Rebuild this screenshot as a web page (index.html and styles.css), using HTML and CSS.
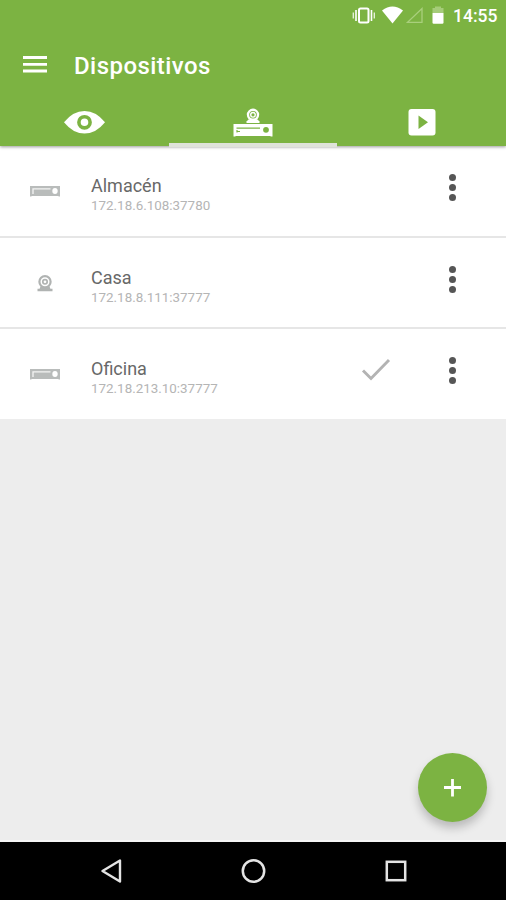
FILE: index.html
```html
<!DOCTYPE html>
<html lang="es">
<head>
<meta charset="utf-8">
<title>Dispositivos</title>
<link rel="stylesheet" href="styles.css">
</head>
<body>
<svg class="defs" width="0" height="0">
  <symbol id="dvr" viewBox="0 0 30 11">
    <path fill="#b9bcbb" d="M0 0h30v10.5h-1.5V10h-27v.5H0z"/>
    <path fill="none" stroke="#f4f4f4" stroke-width="1.3" d="M3 8V2.900H20.500"/>
    <ellipse cx="25" cy="5" rx="2.700" ry="3" fill="#fff"/>
  </symbol>
</svg>
<div class="screen">
  <header class="header">
    <div class="status">
      <svg width="104" height="32" viewBox="350 0 104 32">
        <g fill="none" stroke="#fff">
          <rect x="359" y="8.500" width="9.500" height="14" rx="1.500" stroke-width="2"/>
          <path stroke-width="1.600" d="M356 10v11M371.500 10v11"/>
          <path stroke-width="1.300" opacity=".85" d="M353.300 12.500v6M374.300 12.500v6"/>
        </g>
        <path fill="#fff" d="M382 10.500Q392.500 2.500 403 10.500L392.500 23.500z"/>
        <path fill="none" stroke="#a9cf7c" stroke-width="1.300" d="M407.500 22.300H422V8.500z"/>
        <path fill="#a5cc79" d="M435 6.500h6V8h2.500v5H432.500V8H435z"/>
        <path fill="#fff" d="M432.500 13h11v9.500q0 1.200-1.200 1.200h-8.600q-1.200 0-1.200-1.200z"/>
      </svg>
      <span class="clock">14:55</span>
    </div>
    <div class="bar">
      <svg width="24" height="18" viewBox="0 0 24 18"><path stroke="#fff" stroke-width="2.800" d="M0 1.500h24M0 8.300h24M0 15h24"/></svg>
      <h1 class="title">Dispositivos</h1>
    </div>
    <nav class="tabs">
      <div class="tab">
        <svg width="42" height="24" viewBox="0 0 42 24"><path fill="#fff" d="M1 12.300Q10 1 21.500 1T42 12.300Q33 23.600 21.500 23.600T1 12.300z"/><circle cx="21.500" cy="12.300" r="5.600" fill="none" stroke="#7cb342" stroke-width="3.600"/></svg>
      </div>
      <div class="tab active">
        <svg width="40" height="29" viewBox="0 0 40 29">
          <circle cx="20" cy="6.800" r="5" fill="none" stroke="#fff" stroke-width="2.400"/>
          <circle cx="20" cy="6.800" r="2.300" fill="none" stroke="#fff" stroke-width="1.400"/>
          <path fill="#fff" d="M15.500 11.500h9l2 2v1.500h-13v-1.500z"/>
          <path fill="#fff" d="M.5 16h39v12.500h-2V28h-35v.5h-2z"/>
          <path fill="none" stroke="#7cb342" stroke-width="1.200" d="M3.500 20.200h23.500M4 22v2.500M4 23.500h3"/>
          <circle cx="33" cy="21.800" r="2.900" fill="#7cb342"/>
        </svg>
      </div>
      <div class="tab">
        <svg width="28" height="28" viewBox="0 0 28 28"><rect x=".5" y="1" width="27" height="26.500" rx="3" fill="#fff"/><path fill="#7cb342" d="M10.500 7.500v13.500l9.500-6.750z"/></svg>
      </div>
    </nav>
  </header>
  <main class="list">
    <div class="row">
      <div class="icon"><svg width="30" height="11"><use href="#dvr"/></svg></div>
      <div class="text"><div class="name">Almacén</div><div class="addr">172.18.6.108:37780</div></div>
      <div class="more"><i></i><i></i><i></i></div>
    </div>
    <div class="row">
      <div class="icon"><svg width="16" height="17" viewBox="0 0 16 17"><g fill="none" stroke="#b0b3b2"><circle cx="8" cy="6.800" r="5.600" stroke-width="2.200"/><circle cx="8" cy="6.800" r="2.200" stroke-width="1.700"/><path stroke-width="2.600" d="M.5 15h15M3 12.700l2 .8h6l2-.8"/></g></svg></div>
      <div class="text"><div class="name">Casa</div><div class="addr">172.18.8.111:37777</div></div>
      <div class="more"><i></i><i></i><i></i></div>
    </div>
    <div class="row">
      <div class="icon"><svg width="30" height="11"><use href="#dvr"/></svg></div>
      <div class="text"><div class="name">Oficina</div><div class="addr">172.18.213.10:37777</div></div>
      <svg class="check" width="30" height="24" viewBox="0 0 30 24"><path fill="none" stroke="#b3b3b3" stroke-width="2.900" d="M2 12.500l8 8L28 2"/></svg>
      <div class="more"><i></i><i></i><i></i></div>
    </div>
  </main>
  <button class="fab" aria-label="Añadir"><svg width="18" height="18" viewBox="0 0 18 18"><path stroke="#fff" stroke-width="2.800" d="M0 8.500h17M8.500 0v17.500"/></svg></button>
  <footer class="nav">
    <svg width="22" height="25" viewBox="0 0 22 25"><path fill="none" stroke="#e4e4e4" stroke-width="2.400" stroke-linejoin="round" d="M20 1.500v21L2.500 12z"/></svg>
    <svg width="26" height="26" viewBox="0 0 26 26"><circle cx="12.500" cy="13" r="10.700" fill="none" stroke="#e4e4e4" stroke-width="2.500"/></svg>
    <svg width="22" height="22" viewBox="0 0 22 22"><rect x="1.800" y="1.800" width="18.400" height="18.400" fill="none" stroke="#e4e4e4" stroke-width="2.500"/></svg>
  </footer>
</div>
</body>
</html>
```

FILE: styles.css
```css
* { box-sizing: border-box; }
body { margin: 0; font-family: Roboto, "Liberation Sans", sans-serif; }
svg { display: block; flex: none; }
.defs { position: absolute; }
.screen {
  position: relative;
  display: flex;
  flex-direction: column;
  width: 506px;
  height: 900px;
  overflow: hidden;
  background: #ededed;
}
.header {
  position: relative;
  z-index: 1;
  height: 146px;
  background: #7cb342;
  box-shadow: 0 1px 3px rgba(0, 0, 0, .4);
}
.status {
  display: flex;
  justify-content: flex-end;
  height: 32px;
  padding-right: 9px;
}
.clock {
  width: 44px;
  margin-left: -1px;
  font-size: 17.5px;
  font-weight: 500;
  line-height: 32px;
  color: #fff;
  white-space: nowrap;
}
.bar {
  display: flex;
  align-items: center;
  gap: 27px;
  height: 66px;
  padding-left: 23px;
}
.title {
  margin: 0;
  font-size: 24px;
  font-weight: 500;
  letter-spacing: .45px;
  line-height: 28px;
  color: #fff;
  padding-top: 2px;
}
.tabs { display: flex; height: 49px; }
.tab {
  flex: 1;
  display: flex;
  align-items: center;
  justify-content: center;
  border-bottom: 4px solid transparent;
  padding-top: 3px;
}
.active { border-color: #dfe3da; }
.list { flex: none; background: #fff; }
.row {
  display: flex;
  align-items: flex-start;
  height: 92px;
  border-bottom: 2px solid #e6e6e6;
}
.row + .row { height: 91px; }
.row:last-child { height: 90px; border-bottom: 0; }
.icon {
  display: flex;
  align-items: center;
  justify-content: center;
  width: 91px;
  height: 91px;
  padding-right: 1px;
}
.text { flex: 1; padding-top: 29px; }
.name { font-size: 18px; line-height: 22px; color: #686868; }
.addr { font-size: 13.4px; line-height: 17px; color: #b5b5b5; }
.check { margin: 29px 54px 0 0; }
.more {
  display: flex;
  flex-direction: column;
  gap: 3px;
  width: 61px;
  padding: 28px 0 0 4px;
}
.more i { width: 7px; height: 7px; border-radius: 50%; background: #565656; }
.fab {
  position: absolute;
  z-index: 1;
  right: 19px;
  bottom: 78px;
  display: flex;
  align-items: center;
  justify-content: center;
  width: 69px;
  height: 69px;
  padding: 0;
  border: 0;
  border-radius: 50%;
  background: #7cb342;
  box-shadow: 0 6px 10px rgba(0, 0, 0, .22);
}
.nav {
  display: flex;
  align-items: center;
  justify-content: space-between;
  height: 58px;
  margin-top: auto;
  padding: 0 99px 0 100px;
  background: #000;
  box-shadow: 0 -2px 0 #f6f6f6;
}
```
